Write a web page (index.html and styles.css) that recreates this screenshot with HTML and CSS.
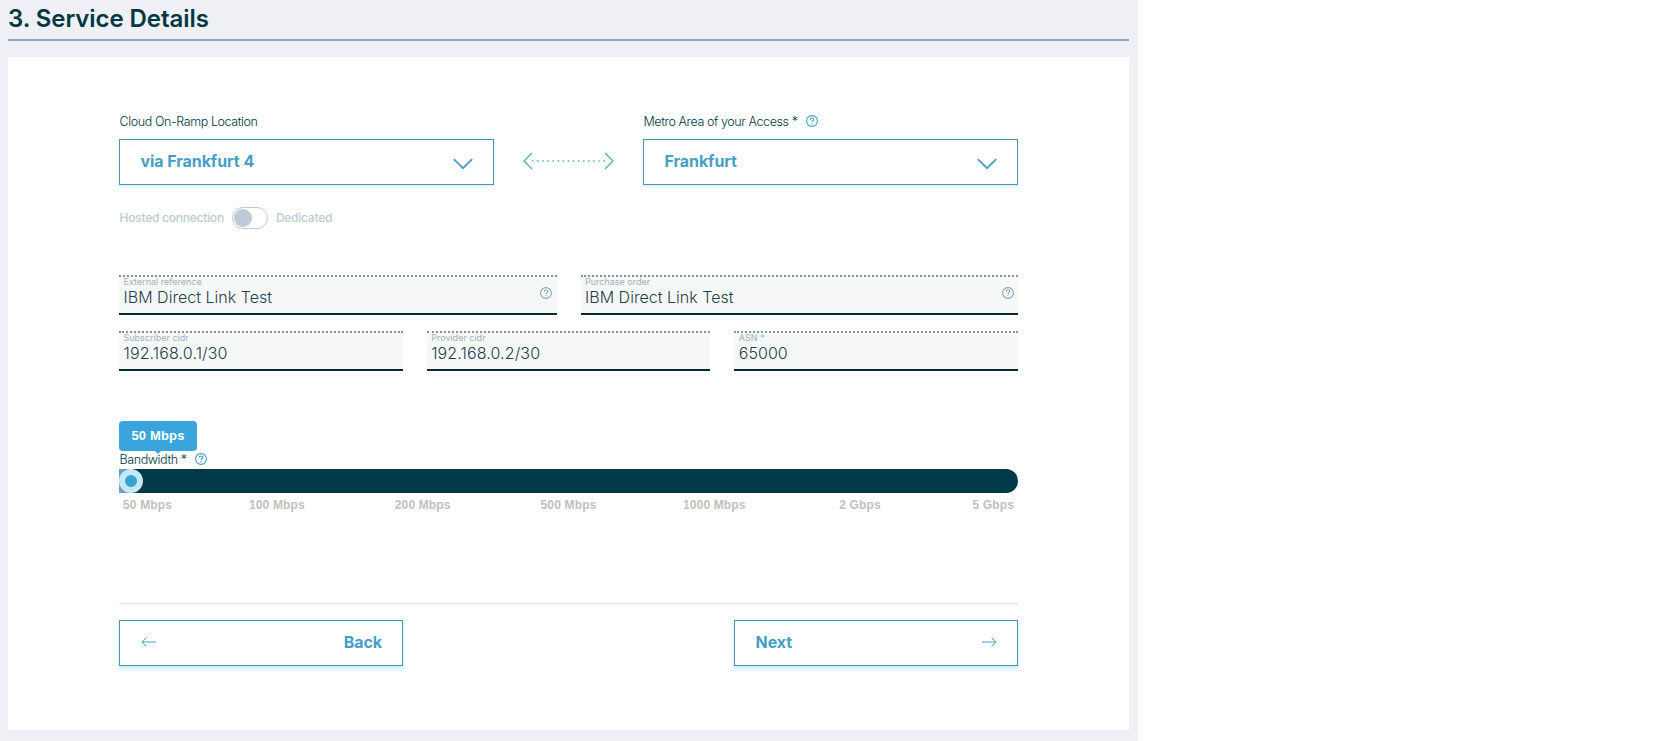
FILE: index.html
```html
<!DOCTYPE html>
<html lang="en">
<head>
<meta charset="utf-8">
<title>Service Details</title>
<link rel="stylesheet" href="styles.css">
</head>
<body>
<svg class="defs" width="0" height="0">
  <symbol id="help" viewBox="0 0 12 12"><circle cx="6" cy="6" r="5.4" fill="none" stroke="currentColor" stroke-width="1.1"/><path d="M4.2 4.7C4.2 3.6 5 3 6 3s1.8.6 1.8 1.5c0 1.2-1.8 1.3-1.8 2.6" fill="none" stroke="currentColor" stroke-width="1.1"/><circle cx="6" cy="8.8" r=".7" fill="currentColor"/></symbol>
  <symbol id="chevron" viewBox="0 0 20 12"><path d="M.8 1.2 10 10.2 19.2 1.2" fill="none" stroke="currentColor" stroke-width="1.8"/></symbol>
</svg>
<main class="page">
  <h1 class="title">3. Service Details</h1>
  <section class="card">
    <div class="locations">
      <div class="location">
        <div class="label"><span>Cloud On-Ramp Location</span></div>
        <div class="select"><span>via Frankfurt 4</span><svg class="chevron"><use href="#chevron"/></svg></div>
      </div>
      <svg class="link" viewBox="0 0 91 18"><path d="M9 1 1 9l8 8M82 1l8 8-8 8" fill="none" stroke="currentColor" stroke-width="1.3"/><path d="M9 9h73" fill="none" stroke="currentColor" stroke-width="1.5" stroke-dasharray="1.5 3.6"/></svg>
      <div class="location">
        <div class="label"><span>Metro Area of your Access *</span><svg class="help"><use href="#help"/></svg></div>
        <div class="select"><span>Frankfurt</span><svg class="chevron"><use href="#chevron"/></svg></div>
      </div>
    </div>
    <div class="connection"><span class="choice">Hosted connection</span><span class="switch"><span class="knob"></span></span><span class="choice">Dedicated</span></div>
    <div class="fields">
      <div class="field"><div class="hint">External reference</div><div class="value">IBM Direct Link Test</div><svg class="help"><use href="#help"/></svg></div>
      <div class="field"><div class="hint">Purchase order</div><div class="value">IBM Direct Link Test</div><svg class="help"><use href="#help"/></svg></div>
    </div>
    <div class="fields">
      <div class="field"><div class="hint">Subscriber cidr</div><div class="value address">192.168.0.1/30</div></div>
      <div class="field"><div class="hint">Provider cidr</div><div class="value address">192.168.0.2/30</div></div>
      <div class="field"><div class="hint">ASN *</div><div class="value">65000</div></div>
    </div>
    <div class="bandwidth">
      <div class="bubble">50 Mbps</div>
      <div class="label bw-label"><span>Bandwidth *</span><svg class="help"><use href="#help"/></svg></div>
      <div class="slider"><span class="thumb"></span></div>
      <div class="ticks"><span>50 Mbps</span><span>100 Mbps</span><span>200 Mbps</span><span>500 Mbps</span><span>1000 Mbps</span><span>2 Gbps</span><span>5 Gbps</span></div>
    </div>
    <div class="actions">
      <div class="button"><svg class="arrow" viewBox="0 0 15 10"><path d="M15 5H1M5.5.7 1 5l4.5 4.3" fill="none" stroke="currentColor" stroke-width="1"/></svg><span>Back</span></div>
      <div class="button"><span>Next</span><svg class="arrow" viewBox="0 0 15 10"><path d="M0 5h14M9.5.7 14 5 9.5 9.3" fill="none" stroke="currentColor" stroke-width="1"/></svg></div>
    </div>
  </section>
</main>
</body>
</html>
```
FILE: styles.css
```css
* { box-sizing: border-box; }
body { margin: 0; background: #fff; color: #003744; font-family: Inter, "Liberation Sans", sans-serif; overflow: hidden; }
.defs { display: none; }
svg { display: block; flex: none; }
span { white-space: nowrap; }
.page { width: 1138px; height: 741px; padding: 0 9px 0 8px; background: #eff0f5; }
.title { margin: 0 0 16px; height: 41px; border-bottom: 2px solid #86a5b5; font-size: 24px; line-height: 37px; font-weight: 600; letter-spacing: -0.06px; }
.card { height: 673px; padding: 56px 111px 0; background: #fff; }
.locations { display: flex; justify-content: space-between; align-items: flex-end; }
.location { width: 375px; }
.label { display: flex; align-items: center; height: 16px; margin-bottom: 10px; font-size: 12.5px; line-height: 16px; font-weight: 300; letter-spacing: -0.4px; }
.label span { padding: 1px 0 0 0.5px; }
.help { width: 12px; height: 12px; margin-left: 8px; color: #3b9fc4; }
.select { display: flex; align-items: center; justify-content: space-between; height: 46px; padding: 0 20px 0 20.5px; border: 1px solid #4596ae; box-shadow: 0 2px 3px #d9f2fb; color: #459fc6; font-size: 16px; font-weight: 700; letter-spacing: -0.06px; }
.select span, .button span { padding-bottom: 2px; }
.chevron { width: 20px; height: 12px; margin-top: 3px; }
.link { width: 91px; height: 18px; margin-bottom: 15px; color: #55a9c5; }
.connection { display: flex; align-items: center; height: 22px; margin-top: 22px; padding-left: 0.5px; color: #bcc9d2; font-size: 12px; font-weight: 500; letter-spacing: -0.24px; }
.choice { padding-bottom: 2px; }
.switch { width: 36px; height: 22px; margin: 0 8px; padding: 1px; border: 1px solid #bdcad5; border-radius: 11px; }
.knob { display: block; width: 18px; height: 18px; border-radius: 50%; background: #bccbda; }
.fields { display: flex; gap: 24px; margin-top: 46px; }
.fields + .fields { margin-top: 16px; }
.field { position: relative; flex: 1; height: 40px; padding: 0 4.5px; border-top: 2px dotted #849396; border-bottom: 2px solid #002b35; background: #f6f8f8; }
.hint { height: 11px; font-size: 9px; line-height: 9px; color: #9fb1bb; }
.value { font-size: 16px; line-height: 18px; font-weight: 300; letter-spacing: 0.03px; color: #1f404f; }
.value.address { letter-spacing: 0.12px; }
.field .help { position: absolute; right: 4.5px; top: 10px; color: #86a7b5; }
.bandwidth { padding-top: 50px; }
.bubble { position: relative; width: 78px; height: 30px; border-radius: 4px; background: #3aa5dc; color: #fff; font: 700 13px/30px "Liberation Sans", sans-serif; letter-spacing: 0.15px; text-align: center; }
.bubble::after { content: ""; position: absolute; left: 36px; top: 30px; border: 3px solid transparent; border-top-color: #3aa5dc; border-bottom: 0; }
.bw-label { margin: 0 0 2px; }
.slider { height: 24px; border-radius: 0 12px 12px 0; background: linear-gradient(90deg, #64a5bc 12px, #003a48 12px); }
.thumb { display: block; width: 24px; height: 24px; border: 6px solid #c7e7f8; border-radius: 50%; background: #35a4d2; }
.ticks { display: flex; padding: 0 4px; margin-top: 4px; height: 16px; font: 700 12px/16px "Liberation Sans", sans-serif; letter-spacing: 0.15px; color: #c0c0c0; }
.ticks span { flex: 1; text-align: center; }
.ticks span:first-child { flex: 0 0 81px; text-align: left; }
.ticks span:last-child { flex: 0 0 81px; text-align: right; }
.actions { display: flex; justify-content: space-between; margin-top: 90px; padding-top: 16px; border-top: 1px solid #dae1e5; }
.button { display: flex; align-items: center; justify-content: space-between; width: 284px; height: 46px; padding: 0 20px 0 20.5px; border: 1px solid #4596ae; box-shadow: 0 3px 4px #c9ebfa; color: #459fc6; font-size: 16px; font-weight: 700; letter-spacing: -0.06px; }
.arrow { width: 15px; height: 10px; margin-bottom: 2px; }
```
